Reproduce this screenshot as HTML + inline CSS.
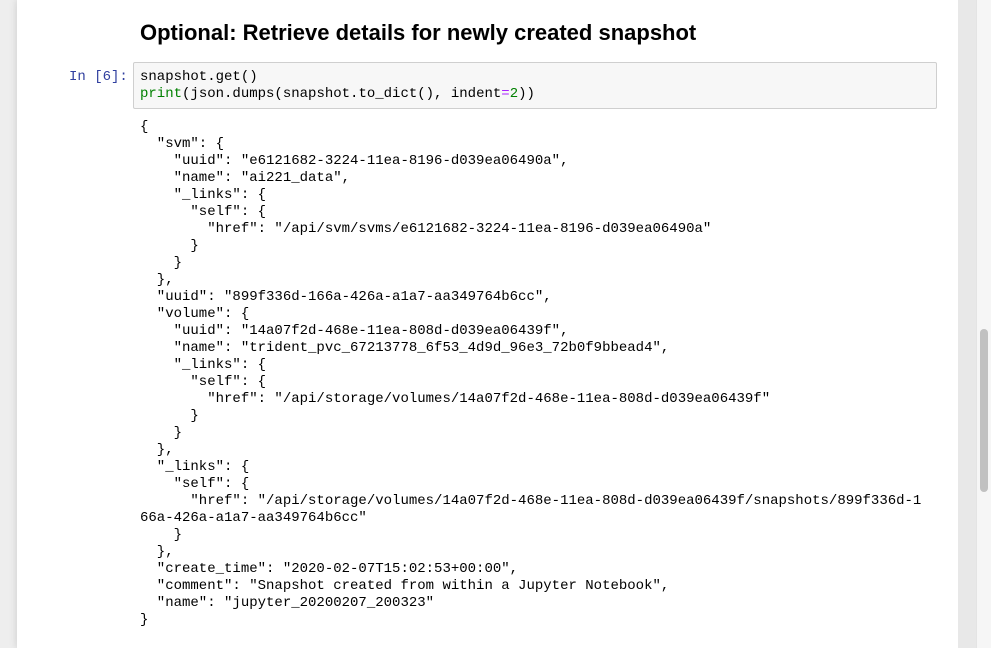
<!DOCTYPE html>
<html><head><meta charset="utf-8"><style>
html,body{margin:0;padding:0;width:991px;height:648px;overflow:hidden;background:#eee;font-family:"Liberation Sans",Arial,sans-serif}
.left{position:absolute;left:0;top:0;width:17px;height:648px;background:#eeeeee}
.page{position:absolute;left:17px;top:0;width:941px;height:648px;background:#fff;box-shadow:0 0 8px rgba(0,0,0,0.15)}
.gap{position:absolute;left:958px;top:0;width:18px;height:648px;background:#e8e8e8}
.track{position:absolute;left:976px;top:0;width:15px;height:648px;background:#f6f6f6;border-left:1px solid #e4e4e4}
.thumb{position:absolute;left:980px;top:329px;width:8px;height:163px;border-radius:4px;background:#c1c1c1}
h2{position:absolute;left:140px;top:20px;margin:0;font-size:22px;font-weight:bold;color:#000}
.prompt{position:absolute;left:69px;top:69px;font-family:"Liberation Mono",monospace;font-size:14px;color:#303F9F}
.inbox{position:absolute;left:133px;top:62px;width:802px;height:45px;background:#f7f7f7;border:1px solid #cfcfcf;border-radius:2px}
pre{margin:0;font-family:"Liberation Mono",monospace;font-size:14px;line-height:17px;color:#000}
.in{position:absolute;left:140px;top:69px}
.out{position:absolute;left:140px;top:119px}
.g{color:#008000}.p{color:#AA22FF}
</style></head><body>
<div class="left"></div><div class="page"></div><div class="gap"></div><div class="track"></div><div class="thumb"></div>
<h2>Optional: Retrieve details for newly created snapshot</h2>
<div class="prompt">In [6]:</div>
<div class="inbox"></div>
<pre class="in">snapshot.get()
<span class="g">print</span>(json.dumps(snapshot.to_dict(), indent<span class="p">=</span><span class="g">2</span>))</pre>
<pre class="out">{
  "svm": {
    "uuid": "e6121682-3224-11ea-8196-d039ea06490a",
    "name": "ai221_data",
    "_links": {
      "self": {
        "href": "/api/svm/svms/e6121682-3224-11ea-8196-d039ea06490a"
      }
    }
  },
  "uuid": "899f336d-166a-426a-a1a7-aa349764b6cc",
  "volume": {
    "uuid": "14a07f2d-468e-11ea-808d-d039ea06439f",
    "name": "trident_pvc_67213778_6f53_4d9d_96e3_72b0f9bbead4",
    "_links": {
      "self": {
        "href": "/api/storage/volumes/14a07f2d-468e-11ea-808d-d039ea06439f"
      }
    }
  },
  "_links": {
    "self": {
      "href": "/api/storage/volumes/14a07f2d-468e-11ea-808d-d039ea06439f/snapshots/899f336d-1
66a-426a-a1a7-aa349764b6cc"
    }
  },
  "create_time": "2020-02-07T15:02:53+00:00",
  "comment": "Snapshot created from within a Jupyter Notebook",
  "name": "jupyter_20200207_200323"
}</pre>
</body></html>
